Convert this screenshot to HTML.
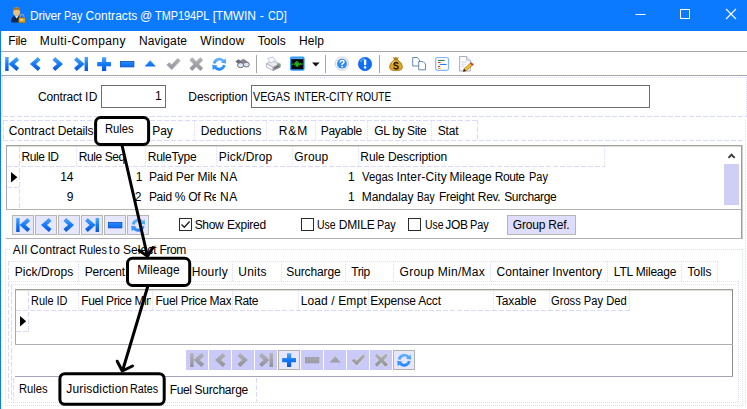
<!DOCTYPE html>
<html><head><meta charset="utf-8"><title>Driver Pay Contracts</title>
<style>
html,body{margin:0;padding:0;background:#fff;}
#win{position:relative;width:747px;height:409px;overflow:hidden;background:#fff;font:12px/14px "Liberation Sans",sans-serif;color:#000;}
#win *{position:absolute;box-sizing:border-box;}
.t{white-space:pre;height:14px;line-height:14px;font-size:12px;}
.tb{left:0;top:0;width:747px;height:31px;background:#0b7aff;}
.lb{left:0;top:31px;width:1px;height:378px;background:#0b7aff;}
.g{background:#a6a6ae;}
.hd{height:1px;background:repeating-linear-gradient(90deg,#dcdcff 0 1px,transparent 1px 2px);}
.vd{width:1px;background:repeating-linear-gradient(180deg,#dcdcff 0 1px,transparent 1px 2px);}
.hs{height:1px;background:repeating-linear-gradient(90deg,#dadaff 0 5px,transparent 5px 7px);}
.vs{width:1px;background:repeating-linear-gradient(180deg,#dadaff 0 5px,transparent 5px 7px);}
.inp{border:1px solid #6e6e6e;background:#fff;}
.nb{width:22px;height:20px;top:215px;background:#e6e6ff;border:1px solid #b6b6b2;}
.nb2{width:22px;height:20px;top:350px;background:#cacaf8;border:1px solid #cacaf8;}
.cb{width:13px;height:13px;top:218px;border:1px solid #2b2b2b;background:#fff;}
svg{overflow:visible;}

</style></head>
<body>
<div id="win">
<div class="tb"></div>
<div class="lb"></div>
<!-- menu / toolbar lines -->
<div class="g" style="left:1px;top:51px;width:746px;height:1px"></div>
<div class="g" style="left:1px;top:75px;width:746px;height:1px"></div>
<div class="hd" style="left:2px;top:77px;width:745px"></div>
<div class="vd" style="left:746px;top:77px;height:40px"></div>
<div class="vd" style="left:2px;top:77px;height:40px"></div>
<div class="hs" style="left:3px;top:116px;width:744px"></div>
<!-- inputs -->
<div class="inp" style="left:101px;top:85px;width:65px;height:23px"></div>
<div class="inp" style="left:251px;top:85px;width:399px;height:23px"></div>
<!-- tab strip 1 -->
<div class="hs" style="left:3px;top:120px;width:475px"></div>
<div class="hs" style="left:3px;top:140px;width:743px"></div>
<div class="vs" style="left:3px;top:120px;height:21px"></div>
<div class="vd" style="left:194px;top:121px;height:19px"></div>
<div class="vd" style="left:266px;top:121px;height:19px"></div>
<div class="vd" style="left:315px;top:121px;height:19px"></div>
<div class="vd" style="left:367px;top:121px;height:19px"></div>
<div class="vd" style="left:431px;top:121px;height:19px"></div>
<div class="vs" style="left:477px;top:120px;height:21px"></div>
<!-- grid 1 -->
<div class="g" style="left:6px;top:145px;width:737px;height:1px;background:#a2a29c"></div>
<div class="g" style="left:6px;top:146px;width:736px;height:1px;background:#dcdcd8"></div>
<div class="g" style="left:6px;top:145px;width:1px;height:65px"></div>
<div class="g" style="left:741px;top:145px;width:1px;height:94px;background:#9c9c9c"></div><div class="g" style="left:742px;top:145px;width:1px;height:94px;background:#cecece"></div><div class="vd" style="left:745px;top:120px;height:285px"></div>
<div class="g" style="left:6px;top:209px;width:736px;height:1px;background:#b2b2ae"></div>
<div class="g" style="left:6px;top:238px;width:737px;height:1px;background:#b0b0b6"></div>
<div class="hs" style="left:7px;top:166px;width:598px"></div>
<div class="vs" style="left:19px;top:147px;height:62px"></div>
<div class="hs" style="left:7px;top:187px;width:13px"></div>
<div class="vd" style="left:76px;top:147px;height:20px"></div>
<div class="vd" style="left:145px;top:147px;height:20px"></div>
<div class="vd" style="left:216px;top:147px;height:20px"></div>
<div class="vd" style="left:292px;top:147px;height:20px"></div>
<div class="vd" style="left:358px;top:147px;height:20px"></div>
<div class="vd" style="left:604px;top:147px;height:20px"></div>
<!-- scrollbar -->
<svg style="left:727px;top:152px" width="9" height="7" viewBox="0 0 9 7"><path d="M1.5 5.9 L4.55 2.6 L7.6 5.9" fill="none" stroke="#3c3c3c" stroke-width="2"/></svg>
<div style="left:724px;top:164px;width:15px;height:41px;background:#cfcff6"></div>
<!-- row pointer 1 -->
<svg style="left:11px;top:171.5px" width="7" height="11" viewBox="0 0 7 11"><path d="M0 0 L6.4 5.3 L0 10.6 Z" fill="#000"/></svg>
<!-- navigator 1 -->
<div class="nb" style="left:12px"></div>
<div class="nb" style="left:35px"></div>
<div class="nb" style="left:58px"></div>
<div class="nb" style="left:81px"></div>
<div class="nb" style="left:104px"></div>
<div class="nb" style="left:127px"></div>
<!-- checkboxes -->
<div class="cb" style="left:179px"></div>
<svg style="left:180px;top:219px" width="11" height="11" viewBox="0 0 11 11"><path d="M1.5 5.5 L4.3 8.3 L9.6 2.6" fill="none" stroke="#222" stroke-width="1.4"/></svg>
<div class="cb" style="left:301px"></div>
<div class="cb" style="left:408px"></div>
<!-- Group Ref button -->
<div style="left:507px;top:215px;width:69px;height:20px;background:#dedefc;border:1px solid #b6b6b2"></div>
<!-- group box -->
<div class="hd" style="left:5px;top:249px;width:737px"></div>
<div style="left:11px;top:244px;width:176px;height:12px;background:#fff"></div>
<div class="vd" style="left:5px;top:249px;height:157px"></div>
<div class="vd" style="left:742px;top:249px;height:157px"></div>
<div class="hd" style="left:5px;top:405px;width:738px"></div>
<!-- tab strip 2 -->
<div class="hd" style="left:9px;top:261px;width:709px"></div>
<div class="hd" style="left:9px;top:281px;width:730px"></div>
<div class="vs" style="left:8px;top:261px;height:141px"></div>
<div class="vd" style="left:78px;top:262px;height:19px"></div>
<div class="vd" style="left:232px;top:262px;height:19px"></div>
<div class="vd" style="left:281px;top:262px;height:19px"></div>
<div class="vd" style="left:345px;top:262px;height:19px"></div>
<div class="vd" style="left:393px;top:262px;height:19px"></div>
<div class="vd" style="left:490px;top:262px;height:19px"></div>
<div class="vd" style="left:607px;top:262px;height:19px"></div>
<div class="vd" style="left:681px;top:262px;height:19px"></div>
<div class="vd" style="left:717px;top:262px;height:19px"></div>
<div class="vd" style="left:738px;top:281px;height:122px"></div>
<div class="hd" style="left:9px;top:402px;width:730px"></div>
<div class="hd" style="left:11px;top:284px;width:725px"></div>
<div class="vs" style="left:11px;top:285px;height:115px"></div>
<div class="vs" style="left:13px;top:378px;height:23px"></div>
<!-- grid 2 -->
<div class="g" style="left:15px;top:289px;width:718px;height:1px;background:#a0a09a"></div>
<div class="g" style="left:15px;top:290px;width:717px;height:1px;background:#deded9"></div>
<div class="g" style="left:15px;top:289px;width:1px;height:56px"></div>
<div class="g" style="left:732px;top:289px;width:1px;height:88px;background:#8c8c8c"></div>
<div class="g" style="left:15px;top:344px;width:718px;height:1px;background:#adadb6"></div>
<div class="g" style="left:15px;top:376px;width:718px;height:1px;background:#a4a4b6"></div>
<div class="hs" style="left:16px;top:310px;width:614px"></div>
<div class="vs" style="left:28px;top:291px;height:40px"></div>
<div class="hs" style="left:16px;top:331px;width:13px"></div>
<div class="vd" style="left:78px;top:291px;height:20px"></div>
<div class="vd" style="left:152px;top:291px;height:20px"></div>
<div class="vd" style="left:232px;top:291px;height:20px"></div>
<div class="vd" style="left:298px;top:291px;height:20px"></div>
<div class="vd" style="left:368px;top:291px;height:20px"></div>
<div class="vd" style="left:493px;top:291px;height:20px"></div>
<div class="vd" style="left:549px;top:291px;height:20px"></div>
<div class="vd" style="left:629px;top:291px;height:20px"></div>
<svg style="left:20px;top:315.5px" width="7" height="11" viewBox="0 0 7 11"><path d="M0 0 L6.2 5.3 L0 10.6 Z" fill="#000"/></svg>
<!-- navigator 2 -->
<div class="nb2" style="left:186px"></div>
<div class="nb2" style="left:209px"></div>
<div class="nb2" style="left:232px"></div>
<div class="nb2" style="left:255px"></div>
<div class="nb2" style="left:278px;background:#e6e6ff;border-color:#b2b2aa"></div>
<div class="nb2" style="left:301px"></div>
<div class="nb2" style="left:324px"></div>
<div class="nb2" style="left:347px"></div>
<div class="nb2" style="left:370px"></div>
<div class="nb2" style="left:393px;background:#e6e6ff;border-color:#b2b2aa"></div>
<!-- tab strip 3 -->
<div class="vs" style="left:256px;top:378px;height:24px"></div>

<svg style="left:0;top:0" width="747" height="409" viewBox="0 0 747 409">
<linearGradient id="btb" gradientUnits="userSpaceOnUse" x1="0" y1="57" x2="0" y2="71"><stop offset="0" stop-color="#4fa8ff"/><stop offset="0.55" stop-color="#1276f5"/><stop offset="1" stop-color="#0a55d8"/></linearGradient><linearGradient id="rtb" gradientUnits="userSpaceOnUse" x1="0" y1="57" x2="0" y2="71"><stop offset="0" stop-color="#6ab8ff"/><stop offset="1" stop-color="#1c84ff"/></linearGradient><linearGradient id="gtb" gradientUnits="userSpaceOnUse" x1="0" y1="57" x2="0" y2="71"><stop offset="0" stop-color="#b4b4b8"/><stop offset="1" stop-color="#909098"/></linearGradient><linearGradient id="bn1" gradientUnits="userSpaceOnUse" x1="0" y1="218" x2="0" y2="232"><stop offset="0" stop-color="#4fa8ff"/><stop offset="0.55" stop-color="#1276f5"/><stop offset="1" stop-color="#0a55d8"/></linearGradient><linearGradient id="rn1" gradientUnits="userSpaceOnUse" x1="0" y1="218" x2="0" y2="232"><stop offset="0" stop-color="#6ab8ff"/><stop offset="1" stop-color="#1c84ff"/></linearGradient><linearGradient id="gn1" gradientUnits="userSpaceOnUse" x1="0" y1="218" x2="0" y2="232"><stop offset="0" stop-color="#b4b4b8"/><stop offset="1" stop-color="#909098"/></linearGradient><linearGradient id="bn2" gradientUnits="userSpaceOnUse" x1="0" y1="353" x2="0" y2="367"><stop offset="0" stop-color="#4fa8ff"/><stop offset="0.55" stop-color="#1276f5"/><stop offset="1" stop-color="#0a55d8"/></linearGradient><linearGradient id="rn2" gradientUnits="userSpaceOnUse" x1="0" y1="353" x2="0" y2="367"><stop offset="0" stop-color="#6ab8ff"/><stop offset="1" stop-color="#1c84ff"/></linearGradient><linearGradient id="gn2" gradientUnits="userSpaceOnUse" x1="0" y1="353" x2="0" y2="367"><stop offset="0" stop-color="#b4b4b8"/><stop offset="1" stop-color="#909098"/></linearGradient>
<rect x="5.2" y="57" width="3.4" height="14" fill="url(#btb)"/><path d="M17.8 58.5 L11.6 64 L17.8 69.5" fill="none" stroke="url(#btb)" stroke-width="4" stroke-linejoin="miter"/>
<path d="M39.2 58.5 L33 64 L39.2 69.5" fill="none" stroke="url(#btb)" stroke-width="4" stroke-linejoin="miter"/>
<path d="M53.8 58.5 L60 64 L53.8 69.5" fill="none" stroke="url(#btb)" stroke-width="4" stroke-linejoin="miter"/>
<rect x="84.6" y="57" width="3.4" height="14" fill="url(#btb)"/><path d="M75.4 58.5 L81.6 64 L75.4 69.5" fill="none" stroke="url(#btb)" stroke-width="4" stroke-linejoin="miter"/>
<path d="M102 57.3 h4.2 v4.8 h4.8 v4.2 h-4.8 v4.6 h-4.2 v-4.6 h-4.8 v-4.2 h4.8 z" fill="url(#btb)"/>
<rect x="120.5" y="61.5" width="13.4" height="5.4" fill="url(#btb)" stroke="#0a4fc8" stroke-width="0.8"/>
<path d="M144.6 66.4 L150.2 60.2 L155.8 66.4 Z" fill="url(#btb)"/>
<path d="M167.9 63.6 L171.6 67.2 L179.2 59.4" fill="none" stroke="#dcdce4" stroke-width="4.8" stroke-linejoin="miter"/><path d="M167.9 63.6 L171.6 67.2 L179.2 59.4" fill="none" stroke="url(#gtb)" stroke-width="3.4" stroke-linejoin="miter"/>
<path d="M190.9 58.7 L201.7 69.5 M201.7 58.7 L190.9 69.5" fill="none" stroke="#dcdce4" stroke-width="4.8"/><path d="M190.9 58.7 L201.7 69.5 M201.7 58.7 L190.9 69.5" fill="none" stroke="url(#gtb)" stroke-width="3.4"/>
<path d="M214.2 63.4 A5.2 5.2 0 0 1 223.4 61.2" fill="none" stroke="url(#rtb)" stroke-width="2.8"/><path d="M221.0 62.8 L226.2 63.6 L225.6 58.2 Z" fill="url(#rtb)"/><path d="M224.2 65.0 A5.2 5.2 0 0 1 215.0 67.2" fill="none" stroke="url(#rtb)" stroke-width="2.8"/><path d="M217.4 65.6 L212.2 64.8 L212.8 70.2 Z" fill="url(#rtb)"/>
<g transform="translate(235,58)">
<path d="M0.4 3.6 L3.4 1.2 L8.4 4.6 L5 7.6 Z" fill="#6c6c74"/>
<path d="M5.4 2.4 L8.6 0.8 L13.6 4.4 L10.6 6.8 Z" fill="#85858d"/>
<ellipse cx="5.6" cy="7.2" rx="3.1" ry="2.5" fill="#dfe8f4" stroke="#6e6e78" stroke-width="1"/>
<ellipse cx="11.4" cy="6.6" rx="2.9" ry="2.4" fill="#dfe8f4" stroke="#6e6e78" stroke-width="1"/>
</g>
<rect x="256" y="55" width="1" height="18" fill="#a4a4ac"/>
<rect x="325" y="55" width="1" height="18" fill="#a4a4ac"/>
<rect x="379" y="55" width="1" height="18" fill="#a4a4ac"/>
<g transform="translate(266,56.6)">
<path d="M0.4 7 L7 4 L14.2 7.4 L7.2 10.8 Z" fill="#e9e9f0" stroke="#a9a9b3" stroke-width="0.8"/>
<path d="M1.6 2 L6.8 0.3 L9.8 4.2 L4.4 6.2 Z" fill="#f6f9ff" stroke="#b4bccb" stroke-width="0.8"/>
<path d="M0.4 7 L7.2 10.8 L7.2 13.9 L0.4 10.4 Z" fill="#f7f7fb" stroke="#a9a9b3" stroke-width="0.8"/>
<path d="M7.2 10.8 L14.2 7.4 L14.2 10.6 L7.2 13.9 Z" fill="#9c9ca4" stroke="#8c8c96" stroke-width="0.8"/>
<path d="M8.6 11.6 L13 9.4" stroke="#5c5c64" stroke-width="1.2"/>
<rect x="11" y="6.8" width="1.8" height="1.5" fill="#2fd02f"/>
</g>
<g transform="translate(290,56.6)">
<rect x="0.6" y="0.6" width="13.4" height="12.8" rx="1.2" fill="#0a0a0a" stroke="#2a9cff" stroke-width="1.3"/>
<rect x="1.2" y="1" width="12.2" height="1.5" fill="#56b4ff"/>
<path d="M1.8 7.8 L3.6 7.4 L4.6 8.2 L5.4 5.6 L6.2 9.8 L7 4.4 L7.8 10 L8.6 6 L9.6 8.6 L10.6 6.6 L11.4 8 L12.8 7.2" fill="none" stroke="#1fbf1f" stroke-width="1"/>
</g>
<path d="M312 62.4 L319.6 62.4 L315.8 66.4 Z" fill="#111"/>
<g transform="translate(335,56.7)">
<circle cx="7" cy="7" r="6.7" fill="#f1f3fb" stroke="#c9c9c6" stroke-width="0.8"/>
<circle cx="7" cy="7" r="4.9" fill="#2f88f6"/>
<path d="M5.2 5.7 Q5.2 3.8 7.1 3.8 Q9 3.8 9 5.4 Q9 6.5 7.1 7.4 L7.1 8.2" fill="none" stroke="#fff" stroke-width="1.5"/>
<rect x="6.3" y="9.1" width="1.6" height="1.5" fill="#fff"/>
</g>
<g transform="translate(358,57)">
<circle cx="7" cy="7" r="6.7" fill="#0d6ef9" stroke="#0a54d6" stroke-width="0.6"/>
<path d="M2.4 5 A5.2 5.2 0 0 1 7 1.6" fill="none" stroke="#4aa0ff" stroke-width="1.6"/>
<rect x="5.9" y="2.6" width="2.4" height="5.6" rx="0.9" fill="#fff"/>
<rect x="5.9" y="9.3" width="2.4" height="2.3" rx="0.7" fill="#fff"/>
</g>
<g transform="translate(389,56.4)">
<path d="M3.6 0.8 Q5 1.6 6.6 0.6 Q8.4 1.6 9.8 0.9 L8.6 3.6 L5.2 3.6 Z" fill="#b88418"/>
<path d="M5.2 3.4 L8.6 3.4 Q13.6 6.8 13.5 10.8 Q13.3 14.3 7 14.3 Q0.7 14.3 0.5 10.8 Q0.4 6.8 5.2 3.4 Z" fill="#dea526" stroke="#9a6c10" stroke-width="0.7"/>
<path d="M3.4 7.2 Q4.6 5.4 6 5" fill="none" stroke="#ffe27a" stroke-width="1.2"/>
<path d="M9.3 7.2 Q8.6 6 7 6 Q4.9 6.2 5 7.8 Q5.2 9 7 9.2 Q9 9.4 9.2 10.8 Q9.2 12.4 7 12.5 Q5.2 12.5 4.7 11.2" fill="none" stroke="#2e2208" stroke-width="1.5"/>
</g>
<g transform="translate(411.5,57)">
<path d="M1.2 0.5 L5.6 0.5 L8 2.9 L8 9 L1.2 9 Z" fill="#fff" stroke="#5878ae" stroke-width="0.9"/>
<path d="M7.2 4.6 L11.6 4.6 L14 7 L14 12.8 L7.2 12.8 Z" fill="#fff" stroke="#5878ae" stroke-width="0.9"/>
</g>
<g transform="translate(435,57)">
<rect x="0.7" y="0.5" width="12.8" height="12.9" rx="1.8" fill="#fff" stroke="#86b4f8" stroke-width="1.2"/>
<rect x="3" y="2.9" width="6.6" height="1.1" fill="#2a8a3a"/>
<rect x="3" y="4.9" width="2.6" height="1.1" fill="#d23a2a"/>
<rect x="4.6" y="6.9" width="7" height="1.1" fill="#2a7cf0"/>
<rect x="3" y="8.9" width="2.2" height="1.1" fill="#d23a2a"/>
<rect x="3" y="10.8" width="2.6" height="1.1" fill="#e09a2a"/>
</g>
<g transform="translate(458.8,56)">
<path d="M0.8 0.5 L7.8 0.5 L11.6 4.2 L11.6 15 L0.8 15 Z" fill="#fbfbfe" stroke="#a4a4ae" stroke-width="0.9"/>
<path d="M7.8 0.5 L7.8 4.2 L11.6 4.2" fill="#e6e9f4" stroke="#a4a4ae" stroke-width="0.7"/>
<path d="M2.6 6 H8 M2.6 8.2 H7 M2.6 10.4 H5.4" stroke="#cdd5ee" stroke-width="1"/>
<path d="M12.4 6.4 L14.7 8.6 L7.2 14.9 L4.4 15.6 L5.2 12.8 Z" fill="#f0bc34" stroke="#9a6a18" stroke-width="0.6"/>
<path d="M12.4 6.4 L14.7 8.6 L13.3 9.8 L11 7.6 Z" fill="#d6402e"/>
<path d="M4.4 15.6 L5.2 12.8 L7.2 14.9 Z" fill="#2a1c10"/>
</g>
<rect x="16.2" y="218" width="3.4" height="14" fill="url(#bn1)"/><path d="M28.8 219.5 L22.6 225 L28.8 230.5" fill="none" stroke="url(#bn1)" stroke-width="4" stroke-linejoin="miter"/>
<path d="M50.2 219.5 L44 225 L50.2 230.5" fill="none" stroke="url(#bn1)" stroke-width="4" stroke-linejoin="miter"/>
<path d="M64.8 219.5 L71 225 L64.8 230.5" fill="none" stroke="url(#bn1)" stroke-width="4" stroke-linejoin="miter"/>
<rect x="95.6" y="218" width="3.4" height="14" fill="url(#bn1)"/><path d="M86.4 219.5 L92.6 225 L86.4 230.5" fill="none" stroke="url(#bn1)" stroke-width="4" stroke-linejoin="miter"/>
<rect x="108.5" y="222.5" width="13.4" height="5.4" fill="url(#bn1)" stroke="#0a4fc8" stroke-width="0.8"/>
<path d="M133.2 224.4 A5.2 5.2 0 0 1 142.4 222.2" fill="none" stroke="url(#rn1)" stroke-width="2.8"/><path d="M140.0 223.8 L145.2 224.6 L144.6 219.2 Z" fill="url(#rn1)"/><path d="M143.2 226.0 A5.2 5.2 0 0 1 134.0 228.2" fill="none" stroke="url(#rn1)" stroke-width="2.8"/><path d="M136.4 226.6 L131.2 225.8 L131.8 231.2 Z" fill="url(#rn1)"/>
<rect x="190.2" y="353" width="3.4" height="14" fill="url(#gn2)"/><path d="M202.8 354.5 L196.6 360 L202.8 365.5" fill="none" stroke="url(#gn2)" stroke-width="4" stroke-linejoin="miter"/>
<path d="M224.2 354.5 L218 360 L224.2 365.5" fill="none" stroke="url(#gn2)" stroke-width="4" stroke-linejoin="miter"/>
<path d="M238.8 354.5 L245 360 L238.8 365.5" fill="none" stroke="url(#gn2)" stroke-width="4" stroke-linejoin="miter"/>
<rect x="269.6" y="353" width="3.4" height="14" fill="url(#gn2)"/><path d="M260.4 354.5 L266.6 360 L260.4 365.5" fill="none" stroke="url(#gn2)" stroke-width="4" stroke-linejoin="miter"/>
<path d="M287 353.3 h4.2 v4.8 h4.8 v4.2 h-4.8 v4.6 h-4.2 v-4.6 h-4.8 v-4.2 h4.8 z" fill="url(#bn2)"/>
<rect x="305.5" y="357.5" width="13.4" height="5.4" fill="url(#gn2)" stroke="#9a9aa6" stroke-width="0.8"/>
<path d="M329.6 362.4 L335.2 356.2 L340.8 362.4 Z" fill="url(#gn2)"/>
<path d="M352.9 359.6 L356.6 363.2 L364.2 355.4" fill="none" stroke="#dcdce4" stroke-width="4.8" stroke-linejoin="miter"/><path d="M352.9 359.6 L356.6 363.2 L364.2 355.4" fill="none" stroke="url(#gn2)" stroke-width="3.4" stroke-linejoin="miter"/>
<path d="M375.9 354.7 L386.7 365.5 M386.7 354.7 L375.9 365.5" fill="none" stroke="#dcdce4" stroke-width="4.8"/><path d="M375.9 354.7 L386.7 365.5 M386.7 354.7 L375.9 365.5" fill="none" stroke="url(#gn2)" stroke-width="3.4"/>
<path d="M399.2 359.4 A5.2 5.2 0 0 1 408.4 357.2" fill="none" stroke="url(#rn2)" stroke-width="2.8"/><path d="M406.0 358.8 L411.2 359.6 L410.6 354.2 Z" fill="url(#rn2)"/><path d="M409.2 361.0 A5.2 5.2 0 0 1 400.0 363.2" fill="none" stroke="url(#rn2)" stroke-width="2.8"/><path d="M402.4 361.6 L397.2 360.8 L397.8 366.2 Z" fill="url(#rn2)"/>
<g transform="translate(10,7)">
<path d="M1 15.6 Q1 9.6 5 8.8 L8.6 8.8 Q11.6 9.6 11.6 15.6 Z" fill="#0a2a5a"/>
<path d="M4.6 8.6 L6.6 11.4 L8.8 8.6 Z" fill="#e8eef8"/>
<ellipse cx="6.6" cy="4.6" rx="3.5" ry="4.3" fill="#f0c070"/>
<path d="M3 4.4 Q2.8 0.2 6.6 0.2 Q10.4 0.2 10.2 4.6 Q9.4 2.6 6.4 2.8 Q4 2.8 3 4.4 Z" fill="#a8742c"/>
<path d="M10 11 L10 9.4 Q10 7.6 12 7.6 Q14 7.6 14 9.4 L14 11" fill="none" stroke="#9aa0b0" stroke-width="1.1"/>
<rect x="8.8" y="10.8" width="6.4" height="5" fill="#d8a42c" stroke="#8a6410" stroke-width="0.6"/>
<rect x="10.4" y="12" width="2.4" height="1.6" fill="#f8e08a"/>
</g>
<path d="M635.5 14.5 H645.5" stroke="#fff" stroke-width="1"/>
<rect x="680.5" y="9.5" width="9" height="9" fill="none" stroke="#fff" stroke-width="1"/>
<path d="M726 9 L736 19 M736 9 L726 19" stroke="#fff" stroke-width="1.1"/>
</svg>
<svg style="left:0;top:0" width="747" height="409" viewBox="0 0 747 409">
<g fill="none" stroke="#000" stroke-width="3" stroke-linecap="round" stroke-linejoin="round">
<line x1="122.2" y1="146" x2="147.3" y2="255.5"/>
<path d="M139.2 250.4 L147.5 256.2 L152.8 247.6"/>
<line x1="147.6" y1="287" x2="122.6" y2="370.5"/>
<path d="M117.2 361.2 L122.3 371 L132.5 366"/>
</g>
<g fill="#fff" stroke="#000" stroke-width="3">
<rect x="95.6" y="117.6" width="53" height="26.9" rx="5" ry="5"/>
<rect x="127.5" y="258.3" width="62.2" height="27.2" rx="5" ry="5"/>
<rect x="59.9" y="373.7" width="104.3" height="30.6" rx="5" ry="5"/>
</g>
</svg>

<span class="t" style="top:9.0px;letter-spacing:-0.200px;color:#fff;left:30.0px;">Driver</span>
<span class="t" style="top:9.0px;letter-spacing:0.000px;transform-origin:0 0;transform:scaleX(0.8832);color:#fff;left:64.1px;">Pay</span>
<span class="t" style="top:9.0px;letter-spacing:0.043px;color:#fff;left:85.6px;">Contracts</span>
<span class="t" style="top:9.0px;letter-spacing:-0.250px;color:#fff;left:140.0px;">@</span>
<span class="t" style="top:9.0px;letter-spacing:0.000px;transform-origin:0 0;transform:scaleX(0.9061);color:#fff;left:154.7px;">TMP194PL</span>
<span class="t" style="top:9.0px;letter-spacing:-0.160px;color:#fff;left:212.7px;">[TMWIN</span>
<span class="t" style="top:9.0px;letter-spacing:-0.250px;color:#fff;left:259.8px;">-</span>
<span class="t" style="top:9.0px;letter-spacing:0.000px;transform-origin:0 0;transform:scaleX(0.9044);color:#fff;left:267.6px;">CD]</span>
<span class="t" style="top:34.0px;letter-spacing:-0.248px;left:8.3px;">File</span>
<span class="t" style="top:34.0px;letter-spacing:0.408px;left:39.8px;">Multi-Company</span>
<span class="t" style="top:34.0px;letter-spacing:0.089px;left:139.0px;">Navigate</span>
<span class="t" style="top:34.0px;letter-spacing:0.282px;left:200.3px;">Window</span>
<span class="t" style="top:34.0px;letter-spacing:-0.004px;left:257.7px;">Tools</span>
<span class="t" style="top:34.0px;letter-spacing:0.071px;left:299.0px;">Help</span>
<span class="t" style="top:90.0px;letter-spacing:-0.166px;left:38.0px;">Contract</span>
<span class="t" style="top:90.0px;letter-spacing:0.500px;left:84.9px;">ID</span>
<span class="t" style="top:89.0px;letter-spacing:-0.250px;right:585.5px;">1</span>
<span class="t" style="top:90.0px;letter-spacing:-0.063px;left:188.3px;">Description</span>
<span class="t" style="top:90.0px;letter-spacing:0.000px;transform-origin:0 0;transform:scaleX(0.8967);left:253.4px;">VEGAS</span>
<span class="t" style="top:90.0px;letter-spacing:0.000px;transform-origin:0 0;transform:scaleX(0.8771);left:293.5px;">INTER-CITY</span>
<span class="t" style="top:90.0px;letter-spacing:0.000px;transform-origin:0 0;transform:scaleX(0.8386);left:355.6px;">ROUTE</span>
<span class="t" style="top:124.0px;letter-spacing:0.063px;left:8.7px;">Contract</span>
<span class="t" style="top:124.0px;letter-spacing:-0.181px;left:57.8px;">Details</span>
<span class="t" style="top:124.0px;letter-spacing:-0.144px;left:152.3px;">Pay</span>
<span class="t" style="top:124.0px;letter-spacing:0.073px;left:200.8px;">Deductions</span>
<span class="t" style="top:124.0px;letter-spacing:0.864px;left:278.8px;">R&amp;M</span>
<span class="t" style="top:124.0px;letter-spacing:-0.329px;left:320.8px;">Payable</span>
<span class="t" style="top:124.0px;letter-spacing:-0.355px;left:374.3px;">GL by Site</span>
<span class="t" style="top:124.0px;letter-spacing:-0.220px;left:437.8px;">Stat</span>
<span class="t" style="top:122.0px;letter-spacing:0.000px;transform-origin:0 0;transform:scaleX(0.9362);left:104.9px;">Rules</span>
<span class="t" style="top:150.0px;letter-spacing:-0.436px;left:21.6px;">Rule ID</span>
<span class="t" style="top:150.0px;letter-spacing:-0.425px;left:78.8px;">Rule Seq</span>
<span class="t" style="top:150.0px;letter-spacing:-0.272px;left:147.8px;">RuleType</span>
<span class="t" style="top:150.0px;letter-spacing:0.173px;left:218.8px;">Pick/Drop</span>
<span class="t" style="top:150.0px;letter-spacing:0.135px;left:294.3px;">Group</span>
<span class="t" style="top:150.0px;letter-spacing:-0.076px;left:360.3px;">Rule Description</span>
<span class="t" style="top:170.0px;letter-spacing:-0.250px;right:673.8px;">14</span>
<span class="t" style="top:170.0px;letter-spacing:-0.250px;right:604.8px;">1</span>
<span class="t" style="top:170.0px;letter-spacing:-0.081px;left:148.9px;width:67.3px;overflow:hidden;">Paid Per Mile</span>
<span class="t" style="top:170.0px;letter-spacing:0.428px;left:220.1px;">NA</span>
<span class="t" style="top:170.0px;letter-spacing:-0.250px;right:392.7px;">1</span>
<span class="t" style="top:170.0px;letter-spacing:0.000px;transform-origin:0 0;transform:scaleX(0.9419);left:361.8px;">Vegas</span>
<span class="t" style="top:170.0px;letter-spacing:0.168px;left:396.5px;">Inter-City</span>
<span class="t" style="top:170.0px;letter-spacing:0.011px;left:449.6px;">Mileage</span>
<span class="t" style="top:170.0px;letter-spacing:-0.433px;left:494.7px;">Route</span>
<span class="t" style="top:170.0px;letter-spacing:0.000px;transform-origin:0 0;transform:scaleX(0.9138);left:528.5px;">Pay</span>
<span class="t" style="top:190.0px;letter-spacing:-0.250px;right:673.8px;">9</span>
<span class="t" style="top:190.0px;letter-spacing:-0.250px;right:605.9px;">2</span>
<span class="t" style="top:190.0px;letter-spacing:-0.283px;left:148.9px;width:67.3px;overflow:hidden;">Paid % Of Rev</span>
<span class="t" style="top:190.0px;letter-spacing:0.428px;left:220.1px;">NA</span>
<span class="t" style="top:190.0px;letter-spacing:-0.250px;right:392.7px;">1</span>
<span class="t" style="top:190.0px;letter-spacing:-0.033px;left:361.7px;">Mandalay</span>
<span class="t" style="top:190.0px;letter-spacing:0.000px;transform-origin:0 0;transform:scaleX(0.8526);left:417.1px;">Bay</span>
<span class="t" style="top:190.0px;letter-spacing:-0.277px;left:438.9px;">Freight</span>
<span class="t" style="top:190.0px;letter-spacing:-0.299px;left:477.8px;">Rev.</span>
<span class="t" style="top:190.0px;letter-spacing:-0.359px;left:504.2px;">Surcharge</span>
<span class="t" style="top:218.0px;letter-spacing:-0.344px;left:194.7px;">Show</span>
<span class="t" style="top:218.0px;letter-spacing:-0.248px;left:227.0px;">Expired</span>
<span class="t" style="top:218.0px;letter-spacing:0.000px;transform-origin:0 0;transform:scaleX(0.8743);left:317.3px;">Use</span>
<span class="t" style="top:218.0px;letter-spacing:-0.122px;left:338.7px;">DMILE</span>
<span class="t" style="top:218.0px;letter-spacing:0.000px;transform-origin:0 0;transform:scaleX(0.8985);left:377.0px;">Pay</span>
<span class="t" style="top:218.0px;letter-spacing:0.000px;transform-origin:0 0;transform:scaleX(0.8694);left:424.5px;">Use</span>
<span class="t" style="top:218.0px;letter-spacing:-0.322px;left:445.3px;">JOB</span>
<span class="t" style="top:218.0px;letter-spacing:0.000px;transform-origin:0 0;transform:scaleX(0.9087);left:469.9px;">Pay</span>
<span class="t" style="top:218.0px;letter-spacing:-0.200px;left:512.8px;">Group Ref.</span>
<span class="t" style="top:243.0px;letter-spacing:0.578px;left:12.7px;">All</span>
<span class="t" style="top:243.0px;letter-spacing:0.049px;left:30.0px;">Contract</span>
<span class="t" style="top:243.0px;letter-spacing:0.000px;transform-origin:0 0;transform:scaleX(0.9092);left:78.7px;">Rules</span>
<span class="t" style="top:243.0px;letter-spacing:1.184px;left:108.8px;">to</span>
<span class="t" style="top:243.0px;letter-spacing:0.008px;left:123.1px;">Select</span>
<span class="t" style="top:243.0px;letter-spacing:-0.400px;left:159.5px;">From</span>
<span class="t" style="top:265.0px;letter-spacing:0.043px;left:14.8px;">Pick/Drops</span>
<span class="t" style="top:265.0px;letter-spacing:-0.193px;left:84.8px;">Percent</span>
<span class="t" style="top:265.0px;letter-spacing:0.242px;left:191.8px;">Hourly</span>
<span class="t" style="top:265.0px;letter-spacing:0.214px;left:238.3px;">Units</span>
<span class="t" style="top:265.0px;letter-spacing:-0.122px;left:286.3px;">Surcharge</span>
<span class="t" style="top:265.0px;letter-spacing:-0.445px;left:351.3px;">Trip</span>
<span class="t" style="top:265.0px;letter-spacing:0.256px;left:399.6px;">Group Min/Max</span>
<span class="t" style="top:265.0px;letter-spacing:0.037px;left:496.6px;">Container Inventory</span>
<span class="t" style="top:265.0px;letter-spacing:-0.200px;left:613.8px;">LTL Mileage</span>
<span class="t" style="top:265.0px;letter-spacing:-0.029px;left:687.6px;">Tolls</span>
<span class="t" style="top:263.0px;letter-spacing:0.095px;left:137.2px;">Mileage</span>
<span class="t" style="top:294.0px;letter-spacing:0.000px;transform-origin:0 0;transform:scaleX(0.9122);left:31.1px;">Rule ID</span>
<span class="t" style="top:294.0px;letter-spacing:-0.385px;left:81.3px;width:70.2px;overflow:hidden;">Fuel Price Min</span>
<span class="t" style="top:294.0px;letter-spacing:-0.302px;left:155.6px;width:75.9px;overflow:hidden;">Fuel Price Max</span>
<span class="t" style="top:294.0px;letter-spacing:-0.386px;left:234.3px;">Rate</span>
<span class="t" style="top:294.0px;letter-spacing:0.098px;left:300.8px;width:66.2px;overflow:hidden;">Load / Empty</span>
<span class="t" style="top:294.0px;letter-spacing:-0.184px;left:370.3px;">Expense Acct</span>
<span class="t" style="top:294.0px;letter-spacing:-0.113px;left:495.8px;">Taxable</span>
<span class="t" style="top:294.0px;letter-spacing:0.000px;transform-origin:0 0;transform:scaleX(0.9293);left:551.3px;">Gross Pay Ded</span>
<span class="t" style="top:382.0px;letter-spacing:0.000px;transform-origin:0 0;transform:scaleX(0.9328);left:18.8px;">Rules</span>
<span class="t" style="top:382.0px;letter-spacing:0.170px;left:66.3px;">Jurisdiction</span>
<span class="t" style="top:382.0px;letter-spacing:0.000px;transform-origin:0 0;transform:scaleX(0.8989);left:130.3px;">Rates</span>
<span class="t" style="top:383.0px;letter-spacing:-0.415px;left:169.8px;">Fuel</span>
<span class="t" style="top:383.0px;letter-spacing:-0.197px;left:194.5px;">Surcharge</span>
</div>
</body></html>
